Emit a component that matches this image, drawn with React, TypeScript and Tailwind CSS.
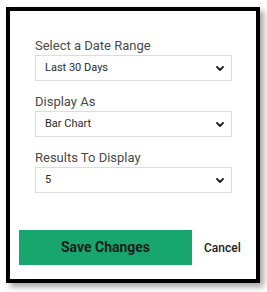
import React from "react";

function Chevron() {
  return (
    <svg width="8" height="5" viewBox="0 0 8 5" className="shrink-0">
      <path d="M1 1 L4 4 L7 1" fill="none" stroke="#1f1f1f" strokeWidth="1.8" strokeLinecap="round" strokeLinejoin="round" />
    </svg>
  );
}

function Field({ label, value, first }: { label: string; value: string; first?: boolean }) {
  return (
    <div className={first ? "" : "mt-[13px]"}>
      <div className="h-[16px] leading-[16px] text-[13px] text-[#4a4a4a] mb-[1px]">{label}</div>
      <div className="h-[26px] w-[197px] border border-[#dcdcdc] bg-white flex items-center justify-between pl-[9px] pr-[7px]">
        <span className="text-[11px] text-[#2a2a2a]">{value}</span>
        <Chevron />
      </div>
    </div>
  );
}

export default function App() {
  return (
    <div className="w-[267px] h-[292px] bg-white pl-[6px] pt-[7px]" style={{ fontFamily: "Roboto, 'Liberation Sans', Arial, sans-serif" }}>
      <div className="w-[254px] h-[276px] border-[4px] border-black bg-white shadow-[4px_4px_6px_rgba(0,0,0,0.35)] flex flex-col">
        <div className="pt-[27px] pl-[25px]">
          <Field label="Select a Date Range" value="Last 30 Days" first />
          <Field label="Display As" value="Bar Chart" />
          <Field label="Results To Display" value="5" />
        </div>
        <div className="mt-[37px] pl-[9px] flex items-center">
          <div className="w-[173px] h-[35px] bg-[#17a76e] flex items-center justify-center text-[14px] font-bold text-[#1c1c1c]">
            Save Changes
          </div>
          <div className="ml-[12px] text-[12px] font-medium text-[#222]">Cancel</div>
        </div>
      </div>
    </div>
  );
}
